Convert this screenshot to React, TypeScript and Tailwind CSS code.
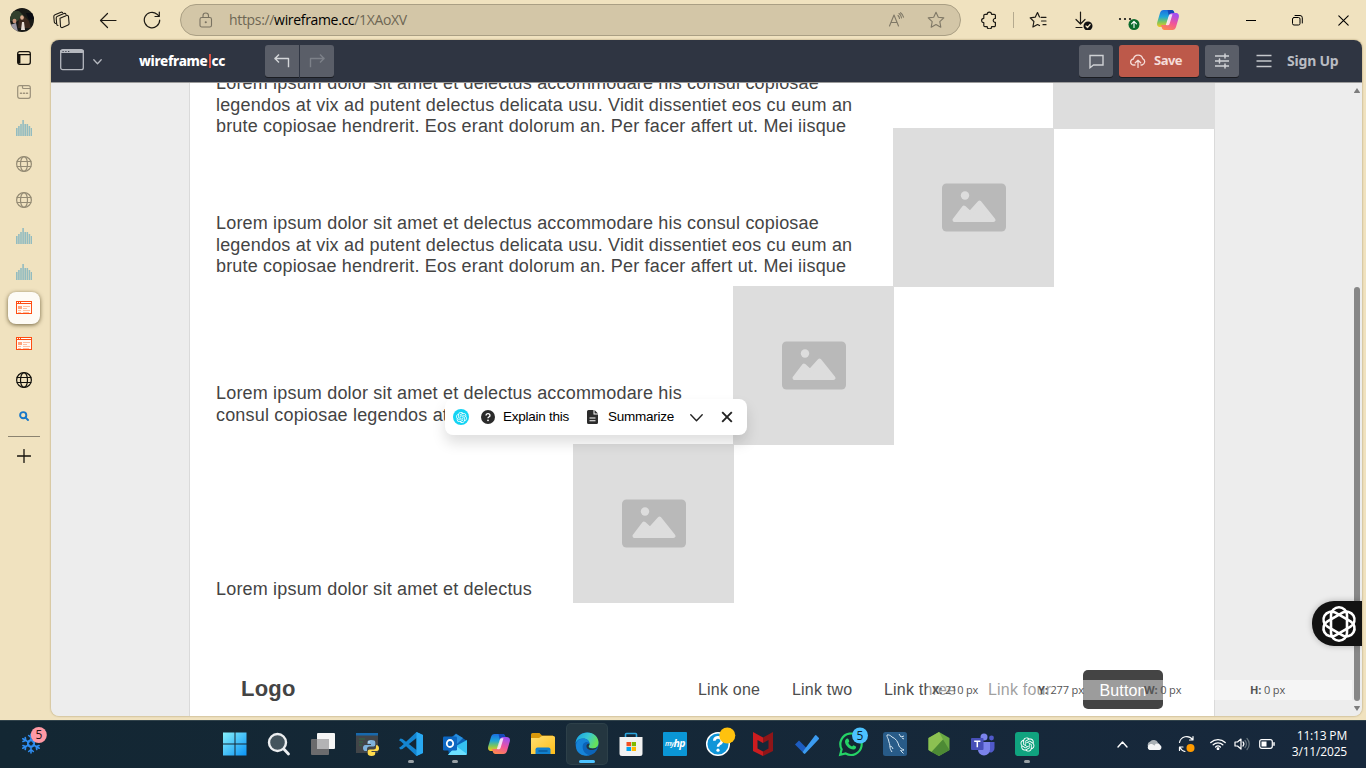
import React from "react";
import { RiOpenaiFill } from "react-icons/ri";

type SvgProps = { w: number; h?: number; vb?: string; className?: string; sw?: number; children: React.ReactNode };

function Line({ w, h, vb, className = "", sw = 1, children }: SvgProps) {
  const hh = h ?? w;
  return (
    <svg width={w} height={hh} viewBox={vb ?? `0 0 ${w} ${hh}`} className={`shrink-0 ${className}`} fill="none" stroke="currentColor" strokeWidth={sw} strokeLinecap="round" strokeLinejoin="round">
      {children}
    </svg>
  );
}

function Art({ w, h, vb, className = "", children }: SvgProps) {
  const hh = h ?? w;
  return (
    <svg width={w} height={hh} viewBox={vb ?? `0 0 ${w} ${hh}`} className={`shrink-0 ${className}`} fill="none">
      {children}
    </svg>
  );
}

function Cell({ className, children }: { className: string; children: React.ReactNode }) {
  return <div className={`flex shrink-0 items-center justify-center ${className}`}>{children}</div>;
}

function Copilot({ id, size }: { id: string; size: number }) {
  return (
    <Art w={size} vb="0 0 24 24">
      <defs>
        <linearGradient id={`${id}a`} x1="0" y1="0" x2="0" y2="1">
          <stop offset="0" stopColor="#1b6fe0" />
          <stop offset=".4" stopColor="#1fa6d8" />
          <stop offset=".7" stopColor="#7cc65c" />
          <stop offset="1" stopColor="#f7c51e" />
        </linearGradient>
        <linearGradient id={`${id}b`} x1="0.6" y1="0" x2="0.2" y2="1">
          <stop offset="0" stopColor="#a34ff0" />
          <stop offset=".5" stopColor="#f0559a" />
          <stop offset="1" stopColor="#ff8a4a" />
        </linearGradient>
      </defs>
      <path d="M7.500 2h8c1.700 0 2.300 1 2.800 2.700L19 7h-3.500c-1.500 0-2.300.8-2.800 2.300L10.500 17c-.5 1.600-1.300 2-3 2H4.500C1.500 19 .6 17 1.200 14.500L4 5c.6-2 1.700-3 3.500-3z" fill={`url(#${id}a)`} />
      <path d="M11.500 2h4c1.700 0 2.300 1 2.800 2.700L19 7h-3.500c-1.200 0-2 .5-2.500 1.500z" fill="#1648b8" />
      <path d="M16.500 22h-8c-1.700 0-2.300-1-2.800-2.700L5 17h3.500c1.500 0 2.300-.8 2.800-2.300L13.500 7c.5-1.600 1.300-2 3-2h3c3 0 3.900 2 3.300 4.500L20 19c-.6 2-1.700 3-3.500 3z" fill={`url(#${id}b)`} />
      <path d="M9.800 17l3-9.500c.4-1.200 1-1.500 2.200-1.300h1.500L13.700 15.500c-.5 1.500-1.300 1.700-2.500 1.700z" fill="#fff" fillOpacity=".8" />
    </Art>
  );
}

function TopBar() {
  return (
    <div className="flex h-10 shrink-0 items-center text-[#1d1a14]">
      <Cell className="w-11">
        <Art w={24}>
          <clipPath id="av"><circle cx="12" cy="12" r="12" /></clipPath>
          <g clipPath="url(#av)">
            <rect width="24" height="24" fill="#191a17" />
            <path d="M0 3h9l4 4-5 6H0z" fill="#33412d" />
            <path d="M9 11l5-3 5 5 2 7H8z" fill="#3d2a20" />
            <ellipse cx="12" cy="9.500" rx="1.800" ry="2.300" fill="#d9ac90" />
            <ellipse cx="4.500" cy="13" rx="2" ry="2.300" fill="#c79379" />
            <path d="M0 17l6-2 2 9H0z" fill="#9c97a2" />
            <path d="M12 14l2 0 1 8h-4z" fill="#e9ded6" />
            <path d="M16 5h8v6l-5 1z" fill="#0a0b12" />
          </g>
        </Art>
      </Cell>
      <Cell className="w-9">
        <Line w={18} sw={1.1}>
          <path d="M7 7.200l6-2.500a1.500 1.500 0 0 1 2.500 1.200l.6 6.600a1.500 1.500 0 0 1-1 1.500l-5.600 2.500a1.500 1.500 0 0 1-2-1.200z" />
          <path d="M5 14.500a1.800 1.800 0 0 1-1.300-1.400L3.200 7.200a2 2 0 0 1 1.300-2L11 2.500a1.600 1.600 0 0 1 2 .9" />
          <path d="M2.500 12.500a1.700 1.700 0 0 1-1.200-1.300L.8 5.800a2 2 0 0 1 1.200-2L8 1.200a1.500 1.500 0 0 1 1.600.5" />
        </Line>
      </Cell>
      <Cell className="w-14"><Line w={18} sw={1.200}><path d="M17 9.500H1.500M8.500 2.500l-7 7 7 7" /></Line></Cell>
      <Cell className="w-8"><Line w={18} sw={1.200}><path d="M16.700 9A7.700 7.700 0 1 1 14 3.200l2 2M16.300 1v4.500H12" /></Line></Cell>
      <div className="ml-3 flex h-8 w-[781px] shrink-0 items-center rounded-full border border-[#aa9f84] bg-[#d3c6a7]">
        <Cell className="w-[50px]">
          <Line w={14} h={16} className="text-[#7a7362]" sw={1.100}>
            <rect x="1" y="5.500" width="11.500" height="9.500" rx="1.800" />
            <path d="M4 5.500V3.700a2.700 2.700 0 0 1 5.500 0v1.800" />
            <circle cx="6.750" cy="10.300" r=".5" fill="currentColor" />
          </Line>
        </Cell>
        <div className="ml-[-2px] flex-1 pb-px font-['Open_Sans',sans-serif] text-[14px] tracking-[-0.33px] text-[#6e6754]">
          https://<span className="text-black">wireframe.cc</span>/1XAoXV
        </div>
        <Cell className="w-10">
          <Line w={17} h={16} className="text-[#7f7866]" sw={1.100}>
            <path d="M1.500 14L6 3l4.500 11M3 10.500h6M10 3.500a4 4 0 0 1 1.500 3M11 1.500A6 6 0 0 1 13.500 6M12.500 .7a7 7 0 0 1 3 4.500" />
          </Line>
        </Cell>
        <Cell className="mr-1 w-10">
          <Line w={18} className="text-[#7f7866]" sw={1.100}>
            <path d="M9 1.200l2.300 5 5.500.7-4 3.800 1 5.500L9 13.500l-4.800 2.700 1-5.500-4-3.800 5.500-.7z" />
          </Line>
        </Cell>
      </div>
      <Cell className="ml-[6px] w-11">
        <Line w={18} sw={1.200}>
          <path d="M5 3.300h2.200a2.200 2.200 0 0 1 4.400 0h2.600a1.200 1.200 0 0 1 1.200 1.200v3h-.8a2 2 0 0 0 0 3.800h.8v3.200a1.200 1.200 0 0 1-1.200 1.200h-2.600a2.200 2.200 0 0 1-4.400 0H5a1.200 1.200 0 0 1-1.200-1.200v-2.800a2.200 2.200 0 0 1 0-4.400V4.500A1.200 1.200 0 0 1 5 3.300z" />
        </Line>
      </Cell>
      <div className="ml-0.5 h-4 w-px bg-[#b5aa8f]" />
      <Cell className="w-12">
        <Line w={18} sw={1.200}>
          <path d="M12 6.300h5M12.500 10h4.500M14 13.700h3M10.500 6l-2-4.500-2.300 4.700-5 .7 3.700 3.600-1 5.500 4.600-2.500 2 1" />
        </Line>
      </Cell>
      <Cell className="w-[42px]">
        <Line w={20} className="ml-0.5" sw={1.200}>
          <path d="M6.500 2v12M2 9.500l4.500 4.500L11 9.500M2 17.500h6" />
          <circle cx="14" cy="16" r="4.500" fill="#111" stroke="none" />
          <path d="M12 16l1.500 1.500 2.600-3" stroke="#f0e2bf" />
        </Line>
      </Cell>
      <Cell className="w-12">
        <Line w={22} className="ml-0.5">
          <g fill="#111" stroke="none"><circle cx="2" cy="10" r="1.100" /><circle cx="7" cy="10" r="1.100" /><circle cx="12" cy="10" r="1.100" /></g>
          <circle cx="16" cy="15.500" r="5.500" fill="#0b6b2d" stroke="none" />
          <path d="M16 18.500v-6M13.500 14.800l2.500-2.500 2.500 2.500" stroke="#fff" strokeWidth="1.100" />
        </Line>
      </Cell>
      <Cell className="w-8"><Copilot id="ct" size={24} /></Cell>
      <Cell className="ml-11 w-[46px]"><Line w={10} className="text-black"><path d="M0 5.500h10" /></Line></Cell>
      <Cell className="w-[46px]"><Line w={11} className="text-black"><rect x=".5" y="2.500" width="7.500" height="7.500" rx="1.500" /><path d="M3 .5h5a2.300 2.300 0 0 1 2.300 2.300V8" /></Line></Cell>
      <Cell className="w-[46px]"><Line w={11} className="text-black" sw={1.100}><path d="M.8 .8l9.400 9.400M10.200 .8L.8 10.200" /></Line></Cell>
    </div>
  );
}

const Bars = () => (
  <Art w={16}>
    <g fill="#93bcc0">
      {[8, 6, 4, 0, 4, 4, 6, 8].map((t, i) => <rect key={i} x={i * 2.1} y={t} width={1.6} height={16 - t} />)}
    </g>
  </Art>
);
const Globe = ({ className }: { className: string }) => (
  <Line w={16} className={className} sw={1.200}>
    <circle cx="8" cy="8" r="7.400" /><ellipse cx="8" cy="8" rx="3.500" ry="7.400" /><path d="M1.200 5.500h13.600M1.200 10.500h13.600" />
  </Line>
);
const WireTab = () => (
  <Art w={16} h={14}>
    <rect x=".5" y=".5" width="15" height="12" stroke="#ff4d12" fill="#fffaf5" />
    <rect width="16" height="3" fill="#ff4d12" />
    <path d="M1 1.500h1M3 1.500h1M5 1.500h10" stroke="#fff" />
    <rect x="2" y="5" width="4" height="3" fill="#ffa37c" />
    <path d="M7 5.500h7M7 7.500h4M2 9.500h3M7 9.500h7M2 11.500h3M7 11.500h6" stroke="#ffb895" strokeWidth=".9" />
  </Art>
);

function Sidebar() {
  return (
    <div className="flex w-12 shrink-0 flex-col items-center">
      <Cell className="h-[34px] pt-[2px]">
        <Line w={14} className="text-[#15120c]" sw={1.300}><rect x=".7" y=".7" width="12.600" height="12.600" rx="2" /><path d="M1 3.700h12" /><path d="M2.200 4v8.500" strokeWidth="2.500" strokeLinecap="butt" /></Line>
      </Cell>
      <Cell className="h-9">
        <Line w={14} className="text-[#9a907a]" sw={1.200}><rect x=".7" y=".7" width="12.600" height="12.600" rx="2" /><path d="M5.500 1v1.500a1 1 0 0 0 1 1H13" /><path d="M3.500 8.300h1M6.500 8.300h1M9.500 8.300h1" strokeWidth="1.500" /></Line>
      </Cell>
      <Cell className="h-9"><Bars /></Cell>
      <Cell className="h-9"><Globe className="text-[#948b74]" /></Cell>
      <Cell className="h-9"><Globe className="text-[#948b74]" /></Cell>
      <Cell className="h-9"><Bars /></Cell>
      <Cell className="h-9"><Bars /></Cell>
      <Cell className="h-9"><Cell className="size-8 rounded-lg bg-[#fdfbf6] shadow-[0_1px_4px_rgba(60,45,10,0.7)]"><WireTab /></Cell></Cell>
      <Cell className="h-9"><WireTab /></Cell>
      <Cell className="h-9"><Globe className="text-[#12110c]" /></Cell>
      <Cell className="h-9"><Line w={10} className="text-[#1878c8]" sw={1.900}><circle cx="4.200" cy="4.200" r="3.100" /><path d="M6.600 6.600l2.400 2.400" /></Line></Cell>
      <div className="mt-0.5 h-px w-8 bg-[#8b8370]" />
      <Cell className="h-[38px]"><Line w={14} className="text-[#15120c]" sw={1.300}><path d="M7 .5v13M.5 7h13" /></Line></Cell>
    </div>
  );
}

const btn = "flex h-8 items-center justify-center bg-[#5a5e68] shadow-[0_1px_0_#1b1d22]";

function AppHeader() {
  return (
    <div className="flex h-[42px] shrink-0 items-center bg-[#2f3542] font-['Noto_Sans',sans-serif] text-[13px] font-bold">
      <Line w={24} h={22} className="-mt-0.5 ml-[9px] text-[#b5b8bf]" sw={1.300}>
        <rect x=".7" y=".7" width="22.600" height="20" rx="2" /><path d="M1.500 2.500h21" strokeWidth="2.800" /><path d="M3 2.500h.2M5.800 2.500h.2M8.600 2.500h.2" stroke="#2f3542" strokeWidth="1.200" />
      </Line>
      <Line w={9} h={6} className="ml-[9px] mt-px text-[#b5b8bf]" sw={1.300}><path d="M.8 .8l3.700 3.900L8.200 .8" /></Line>
      <div className="ml-[37px] flex w-[126px] items-center text-[13.500px] font-extrabold tracking-[-0.30px] text-white">
        wireframe<span className="mx-px h-[14px] w-0.5 bg-[#e2503f]" />cc
      </div>
      <div className={`${btn} w-[34px] rounded-l-[3px]`}><Line w={16} h={14} className="text-[#d4d6d9]" sw={1.400}><path d="M4.500 1L1 4.500 4.500 8M1 4.500h13.500V12.500" strokeLinecap="square" /></Line></div>
      <div className={`${btn} ml-px w-[34px] rounded-r-[3px]`}><Line w={16} h={14} className="text-[#7d8189]" sw={1.400}><path d="M11.500 1L15 4.500 11.500 8M15 4.500H1.500V12.500" strokeLinecap="square" /></Line></div>
      <div className="flex-1" />
      <div className={`${btn} w-[34px] rounded-[3px]`}><Line w={15} h={15} className="text-[#cfd1d4]" sw={1.400}><path d="M1 1.500h13v9.500H4.500L1 13.700z" strokeLinejoin="miter" /></Line></div>
      <div className="ml-1.5 flex h-8 w-20 items-center rounded-[3px] bg-[#bd594a] text-[#f5dcd8] shadow-[0_1px_0_#1b1d22]">
        <Line w={16} h={14} className="ml-[11px]" sw={1.300}><path d="M5 11H3.800A3 3 0 0 1 3.500 5 4.700 4.700 0 0 1 12.700 4.600 3.400 3.400 0 0 1 12 11h-1M8 13.500V6.500M5.300 8.800L8 6.200l2.700 2.600" /></Line>
        <span className="ml-[8px] tracking-[-0.5px]">Save</span>
      </div>
      <div className={`${btn} ml-1.5 w-[34px] rounded-[3px]`}><Line w={14} h={16} className="text-[#d0d2d5]" sw={1.500}><path d="M0 3h14M0 8h14M0 13h14" strokeLinecap="butt" /><path d="M10 1v4M4.500 6v4M10 11v4" /></Line></div>
      <Line w={16} h={14} className="ml-[17px] text-[#c5c8cc]" sw={1.500}><path d="M.5 1.500h15M.5 7h15M.5 12.500h15" strokeLinecap="butt" /></Line>
      <div className="ml-[15px] w-[75px] text-[14px] leading-5 tracking-[-0.20px] text-[#b9bcc2]">Sign Up</div>
    </div>
  );
}

function Placeholder({ className }: { className: string }) {
  return (
    <div className={`absolute flex h-[159px] w-[161px] items-center justify-center bg-[#ddd] ${className}`}>
      <Art w={64} h={49}>
        <rect y=".5" width="64" height="48" rx="4.500" fill="#b9b9b9" />
        <circle cx="23" cy="12.500" r="4.200" fill="#ddd" />
        <path d="M12.500 37L22 24.500L28 30L37.500 19.500L51.500 37z" fill="#ddd" stroke="#ddd" strokeWidth="4" strokeLinejoin="round" />
      </Art>
    </div>
  );
}

const para = "absolute left-[26px] whitespace-nowrap text-[18px] leading-[21.500px] tracking-[0.180px] text-[#444]";

function Canvas() {
  return (
    <div className="relative flex flex-1 overflow-hidden border-t border-[#9b9b9b] bg-[#ededed]">
      <div className="relative ml-[138px] w-[1026px] border-x border-[#dadada] bg-white font-['Liberation_Sans',sans-serif]">
        <div className={`${para} top-[-10px]`}>
          Lorem ipsum dolor sit amet et delectus accommodare his consul copiosae<br />legendos at vix ad putent delectus delicata usu. Vidit dissentiet eos cu eum an<br />brute copiosae hendrerit. Eos erant dolorum an. Per facer affert ut. Mei iisque
        </div>
        <div className={`${para} top-[130px]`}>
          Lorem ipsum dolor sit amet et delectus accommodare his consul copiosae<br />legendos at vix ad putent delectus delicata usu. Vidit dissentiet eos cu eum an<br />brute copiosae hendrerit. Eos erant dolorum an. Per facer affert ut. Mei iisque
        </div>
        <div className={`${para} top-[300px]`}>
          Lorem ipsum dolor sit amet et delectus accommodare his<br />consul copiosae legendos at
        </div>
        <div className={`${para} top-[496px]`}>Lorem ipsum dolor sit amet et delectus</div>
        <div className="absolute left-[863px] top-0 h-[46px] w-[162px] bg-[#ddd]" />
        <Placeholder className="left-[703px] top-[45px]" />
        <Placeholder className="left-[543px] top-[203px]" />
        <Placeholder className="left-[383px] top-[361px]" />
        <div className="absolute left-[51px] top-[593px] text-[22px] font-bold leading-[26px] tracking-[0.200px] text-[#444]">Logo</div>
        <div className="absolute left-[508px] top-[597px] flex text-[16px] leading-5 tracking-[0.200px] text-[#4d4d4d]">
          <span className="w-[94px]">Link one</span><span className="w-[92px]">Link two</span><span className="w-[104px]">Link three</span><span>Link four</span>
        </div>
        <div className="absolute left-[893px] top-[587px] flex h-[39px] w-20 items-center justify-center rounded-[5px] bg-[#444] pt-0.5 text-[16px] tracking-[0.100px] text-white">Button</div>
      </div>

      <div className="absolute left-[877px] top-[597px] flex h-5 w-[424px] items-center bg-white/47 pl-1 font-['Open_Sans',sans-serif] text-[11px] tracking-[-0.150px] text-[#555]">
        {[["X:", "210 px"], ["Y:", "277 px"], ["W:", "0 px"], ["H:", "0 px"]].map(([k, v]) => (
          <span key={k} className="w-[106px] shrink-0 whitespace-nowrap"><b className="text-[#555]">{k}</b> {v}</span>
        ))}
      </div>

      <div className="absolute left-[394px] top-[316px] flex h-9 w-[302px] items-center rounded-lg bg-white font-['Liberation_Sans',sans-serif] text-[13.500px] tracking-[-0.250px] text-black shadow-[0_8px_14px_rgba(0,0,0,0.13)]">
        <Cell className="ml-2 size-4 rounded-full bg-[#14d4f4]"><RiOpenaiFill size={13} className="text-white" /></Cell>
        <Art w={14} className="ml-3"><circle cx="7" cy="7" r="7" fill="#2b2b2b" /><path d="M5 5.400a2 1.800 0 1 1 2.700 1.700Q7 7.400 7 8.300" stroke="#fff" strokeWidth="1.400" /><circle cx="7" cy="10.300" r=".9" fill="#fff" /></Art>
        <span className="ml-2 w-[67px] whitespace-nowrap">Explain this</span>
        <Art w={12} h={14} className="ml-[17px]"><path d="M1.500 0H6.500V4.500H11V12.500a1.500 1.500 0 0 1-1.500 1.500h-8A1.500 1.500 0 0 1 0 12.500V1.500A1.500 1.500 0 0 1 1.500 0z" fill="#2b2b2b" /><path d="M7.500 0L11 3.500H7.500z" fill="#2b2b2b" /><path d="M2.500 8h6M2.500 10.700h6" stroke="#fff" strokeWidth="1.100" /></Art>
        <span className="ml-[9px] w-[66px] whitespace-nowrap">Summarize</span>
        <Line w={13} h={8} className="ml-[16px] mt-0.5 text-[#222]" sw={1.400}><path d="M.8 .8l5.700 5.900L12.200 .8" /></Line>
        <Line w={12} className="ml-[18px] text-[#222]" sw={1.900}><path d="M1.200 1.200l9.600 9.600M10.800 1.200L1.200 10.800" strokeLinecap="butt" /></Line>
      </div>

      <div className="absolute right-0 top-0 flex h-full w-[10px] flex-col items-center">
        <Art w={6} h={5} className="mt-[5px]"><path d="M3 0L6 4.500Q6 5 5.500 5H.5Q0 5 0 4.500z" fill="#7d7d7d" /></Art>
        <div className="mt-[194px] h-[414px] w-1.5 rounded-full bg-[#878787]" />
        <Art w={6} h={5} className="mt-[5px]"><path d="M3 5L6 .5Q6 0 5.500 0H.5Q0 0 0 .5z" fill="#7d7d7d" /></Art>
      </div>

      <div className="absolute right-0 top-[518px] flex h-[45px] w-[50px] items-center rounded-l-[22px] bg-[#121212] pl-[9px] shadow-[0_0_6px_rgba(0,0,0,0.25)]">
        <Line w={36} sw={2.600} className="text-white">
          {[0, 60, 120].map((a) => <rect key={a} x="10" y="1.300" width="16" height="33.400" rx="8" transform={`rotate(${a} 18 18)`} />)}
        </Line>
      </div>
    </div>
  );
}

function TaskIcon({ children, dot = false }: { children: React.ReactNode; dot?: boolean }) {
  return (
    <div className="relative flex h-12 w-11 shrink-0 items-center justify-center">
      {children}
      {dot && <span className="absolute bottom-[5px] h-[3px] w-1.5 rounded-full bg-[#98a0a5]" />}
    </div>
  );
}

function Taskbar() {
  return (
    <div className="flex h-12 shrink-0 items-center border-t border-[#31434b] bg-linear-to-r from-[#132733] to-[#17283c] pb-px">
      <div className="w-[213px] pl-[20px]">
        <Art w={28} h={30} className="-mt-1.5">
          <g stroke="#2f8df0" strokeWidth="1.600" strokeLinecap="round">
            {[0, 60, 120, 180, 240, 300].map((a) => <path key={a} transform={`rotate(${a} 11 17.5)`} d="M11 15V8M8.700 9.500L11 11.500 13.300 9.500M9 15L11 13.800 13 15" />)}
          </g>
          <circle cx="18.800" cy="9" r="8" fill="#ff99a4" />
          <text x="19" y="13.200" textAnchor="middle" className="fill-[#2a1418] font-['Open_Sans',sans-serif] text-[12px]">5</text>
        </Art>
      </div>
      <TaskIcon>
        <Art w={24}><defs><linearGradient id="wn" x1="0" y1="0" x2="1" y2="1"><stop stopColor="#86f0fb" /><stop offset="1" stopColor="#0a93f5" /></linearGradient></defs><path d="M0 .5h11.500v11H0zM12.500 .5h11v11h-11zM0 12.500h11.500v11H0zM12.500 12.500h11v11h-11z" fill="url(#wn)" /></Art>
      </TaskIcon>
      <TaskIcon>
        <Art w={24}><circle cx="10.500" cy="10.500" r="8.500" fill="#44545d" stroke="#eceef0" strokeWidth="2.400" /><path d="M16.800 17l4.700 5" stroke="#eceef0" strokeWidth="2.800" strokeLinecap="round" /></Art>
      </TaskIcon>
      <TaskIcon>
        <Art w={24}><rect x="6" y="1" width="18" height="16" rx="1" fill="#f5f5f5" /><rect x="0" y="7" width="18" height="16" rx="1" fill="#6b6b6d" /><rect x="6" y="7" width="12" height="10" fill="#b3b3b5" /></Art>
      </TaskIcon>
      <TaskIcon>
        <Art w={24}>
          <rect x="1" y="1" width="22" height="20" fill="#424548" /><rect x="1" y="1" width="22" height="2.500" fill="#1769ad" /><path d="M4 7h6M4 10h4M4 13h3" stroke="#316b43" />
          <path d="M16 8c-3 0-3.500 1-3.500 2.500V12H16v1h-5.500C8.500 13 8 14.500 8 16s.7 3 2 3h2v-2c0-1.500 1-2.500 2.500-2.500h4c1 0 1.800-.8 1.800-2v-2C20.300 8.700 19 8 16 8z" fill="#7fb2dc" />
          <path d="M16.500 24c3 0 3.700-1 3.700-2.500V20h-3.700v-1h5.300c1.700 0 2.200-1.300 2.200-2.800s-.7-3-2-3h-1v2c0 1.300-1 2.300-2.300 2.300h-4c-1.200 0-2 .8-2 2v2c0 1.600 1.300 2.500 3.800 2.500z" fill="#ffdb4d" />
          <circle cx="14" cy="10" r=".7" fill="#fff" />
        </Art>
      </TaskIcon>
      <TaskIcon dot>
        <Art w={24}><path d="M17.500 0L24 3v18l-6.500 3L2 9.500 0 8.200l1.500-1.700L3.500 7 17.500 18V6L3.500 17l-2 .5L0 15.800 2 14.500z" fill="#1485d1" /><path d="M17.500 0L24 3v18l-6.500 3z" fill="#29a9f2" /></Art>
      </TaskIcon>
      <TaskIcon dot>
        <Art w={24}><path d="M4 9l9-7.500L24 9v12a2 2 0 0 1-2 2H6z" fill="#0a62b5" /><path d="M7 8l6-6 7 4-8 8z" fill="#2990df" /><path d="M13 14L24 8v13a2 2 0 0 1-2 2H5l8-9z" fill="#35c1f1" /><path d="M13 14l11 8a2 2 0 0 1-2 1H5z" fill="#6ce0ff" /><rect y="4.500" width="14" height="14" rx="1.300" fill="#0d67c2" /><ellipse cx="7" cy="11.500" rx="3.200" ry="3.500" stroke="#fff" strokeWidth="1.800" /></Art>
      </TaskIcon>
      <TaskIcon><Copilot id="cb" size={24} /></TaskIcon>
      <TaskIcon>
        <Art w={24}><defs><linearGradient id="fo" x1="0" y1="0" x2="1" y2="1"><stop stopColor="#ffdf72" /><stop offset="1" stopColor="#ffbd18" /></linearGradient></defs><path d="M0 2.500A1.500 1.500 0 0 1 1.500 1h7l2.500 2.500H22V10H0z" fill="#d9980a" /><path d="M0 6h8l3-2h11.500A1.500 1.500 0 0 1 24 5.500V22H0z" fill="url(#fo)" /><path d="M4.500 22v-4.500A2 2 0 0 1 6.500 15.500h11a2 2 0 0 1 2 2V22z" fill="#1180ce" /><path d="M8 19h8" stroke="#0b5a9c" strokeWidth="1.500" strokeLinecap="round" /></Art>
      </TaskIcon>
      <div className="relative flex h-12 w-11 shrink-0 items-center justify-center">
        <div className="flex h-10 w-10 items-center justify-center rounded bg-[#243640] ring-1 ring-[#2d4049]">
          <Art w={24}>
            <defs><linearGradient id="ed" x1="0" y1="0" x2="1" y2=".4"><stop stopColor="#159fe0" /><stop offset=".55" stopColor="#38c6d4" /><stop offset="1" stopColor="#66e05a" /></linearGradient></defs>
            <circle cx="12" cy="12" r="11.500" fill="#0c64b8" />
            <path d="M.6 11C1.500 4.500 6.500 .5 12.300 .5 19 .5 23.500 5.300 23.500 10.500c0 4-2.700 6-5.800 6-2.800 0-4.200-1-4.200-1.900 0-.7 1-1.200 1-3 0-2.800-2.800-5-6.300-5C4.800 6.600 2 8 .6 11z" fill="url(#ed)" />
            <path d="M8.500 11.500c-2.500 4 .5 11 6 11.700-5 1.500-10.500-.7-12.700-5C-.2 13.500 1.500 7 8 6.600c3.500 0 6 2 6.400 4.300-1.700-1.500-4.300-1.300-5.900.6z" fill="#1684d8" />
            <path d="M14.500 11.500c.3 1.500-.9 2.300-.9 3 0 1 1.500 2 4.100 2 1.800 0 3.300-.6 5.300-1.700-1.200 1.700-3 3-5 3.200-4.500.5-7-2-6.500-4.500.4-1.300 1.500-2 3-2z" fill="#243640" />
          </Art>
        </div>
        <span className="absolute bottom-[5px] h-[3px] w-4 rounded-full bg-[#4cc2ff]" />
      </div>
      <TaskIcon>
        <Art w={24}><path d="M6.500 6V2.500a1 1 0 0 1 1-1h9a1 1 0 0 1 1 1V6" stroke="#2ba5dd" strokeWidth="1.600" /><path d="M.5 5h23v16.500a2.500 2.500 0 0 1-2.500 2.500H3a2.500 2.500 0 0 1-2.500-2.500z" fill="#f2f2f2" /><path d="M7.500 10H12v4.200H7.500z" fill="#f25022" /><path d="M12.700 10H17v4.200h-4.300z" fill="#7fba00" /><path d="M7.500 15H12v4H7.500z" fill="#00a4ef" /><path d="M12.700 15H17v4h-4.300z" fill="#ffb900" /></Art>
      </TaskIcon>
      <TaskIcon>
        <div className="flex size-6 items-center justify-center rounded-[1px] bg-[#0a96d6] font-['Open_Sans',sans-serif] text-[7px] font-semibold italic tracking-[-0.6px] text-white">my<span className="text-[10.500px] font-bold">hp</span></div>
      </TaskIcon>
      <TaskIcon>
        <Art w={34} h={34}>
          <circle cx="16" cy="17" r="11.300" fill="#0f95d8" stroke="#fff" strokeWidth="1.500" /><path d="M12.300 13.800a3.700 3.500 0 1 1 5.300 3.200Q16 18 16 19.800" stroke="#fff" strokeWidth="2.600" /><circle cx="16" cy="23.200" r="1.600" fill="#fff" /><circle cx="25.300" cy="8.500" r="8" fill="#ffc20e" />
        </Art>
      </TaskIcon>
      <TaskIcon>
        <Art w={22} h={24}><path d="M1 0l10 5.500V11L5.500 8v8.500L11 19.500V24L1 19z" fill="#cc1c1f" /><path d="M21 0L11 5.500V11l5.500-3v8.500L11 19.500V24l10-5z" fill="#8f1518" /></Art>
      </TaskIcon>
      <TaskIcon>
        <Art w={24}><path d="M0 12.500l4-4 7.500 7.500-4 4z" fill="#1d5cc0" /><path d="M7.500 20L20 3.500a1 1 0 0 1 1.500 0l2.200 2.200a1 1 0 0 1 0 1.500L10.300 21.500a1 1 0 0 1-1.500 0L5.500 18z" fill="#3b9bf0" /></Art>
      </TaskIcon>
      <TaskIcon>
        <Art w={34} h={34}>
          <path d="M6.200 27.700l1.400-5.400A10.700 10.700 0 1 1 11.700 26.500z" fill="#132733" stroke="#25d366" strokeWidth="2.200" /><path d="M12.500 11.800c1-.8 1.700-.3 2 .5l.7 1.700c.3.8-.8 1.300-.9 1.800.7 1.700 2 2.900 3.700 3.600.6 0 1.200-1.400 2-1l1.900 1c.7.5-.1 2.600-1.900 3-4 .6-9.300-4.200-9-8 .1-1 .7-2 1.500-2.600z" fill="#25d366" />
          <circle cx="26" cy="8.500" r="8" fill="#4cc2ff" /><text x="26" y="12.700" textAnchor="middle" className="fill-[#0c2230] font-['Open_Sans',sans-serif] text-[12px]">5</text>
        </Art>
      </TaskIcon>
      <TaskIcon>
        <Art w={24}><rect width="24" height="24" rx="2.500" fill="#285b88" /><path d="M4 3c1.500-.5 3.500.3 5 2 4 1.500 6 5 7 9 1 2 3 3 5 4-2 .3-3 .3-3.500.5l3 3M4 3c-.3 2 1 3 1.500 5 .5 3 1.500 4 1.500 7 0 2 1 3.500 2 5M7 15c1-2 2 0 3 2M16 2l2 3 3-1M19 6l2 1" stroke="#d4e5f1" /></Art>
      </TaskIcon>
      <TaskIcon>
        <Art w={22} h={24}><path d="M11 0l10.500 6v12L11 24 .5 18V6z" fill="#6aa944" /><path d="M11 0l4 7.500L3.500 20 .5 18V6z" fill="#8cc152" /><path d="M15 7.500L21.500 18 11 24 3.500 20z" fill="#4d8a35" /></Art>
      </TaskIcon>
      <TaskIcon>
        <Art w={24}><circle cx="13" cy="5" r="3.500" fill="#7b83eb" /><circle cx="20.500" cy="6" r="2.400" fill="#5059c9" /><path d="M17 10h6.500v6a4 4 0 0 1-6.500 3.500z" fill="#5059c9" /><path d="M7 10h12v7.500a6 6 0 0 1-12 0z" fill="#7b83eb" /><rect x="0" y="6" width="12.500" height="12" rx="1" fill="#474fb8" /><path d="M3.200 9.300h6.200M6.300 9.300V15.300" stroke="#fff" strokeWidth="1.500" /></Art>
      </TaskIcon>
      <TaskIcon dot><Cell className="size-6 rounded-[3px] bg-[#10a37f]"><RiOpenaiFill size={17} className="text-white" /></Cell></TaskIcon>
      <div className="flex flex-1 items-center text-white">
        <Line w={11} h={7} className="ml-[68px]" sw={1.400}><path d="M1 6l4.500-5L10 6" /></Line>
        <Art w={16} h={11} className="ml-[18px]"><path d="M4 9.500a3.700 3.700 0 0 1 .2-7A5 5 0 0 1 12 3.500l-3 3z" fill="#a9b0b5" /><path d="M3.500 11a3 3 0 0 1 0-5.500c2-1 3.500 0 5 1 1-2.500 4.500-3 5.500-.5A2.700 2.700 0 0 1 13.500 11z" fill="#f4f5f6" /></Art>
        <Line w={18} h={18} className="ml-[16px]" sw={1.200}><path d="M1.500 7.500A7.300 7.300 0 0 1 14.500 4.500M15 1.500v3.500h-3.500M1.500 15.500V12H5M2 12.500a7 7 0 0 0 5 4" /><circle cx="12.500" cy="13" r="4" fill="#ff9b00" stroke="none" /></Line>
        <Line w={16} h={12} className="ml-[14px]" sw={1.300}><path d="M.8 4.500a10.500 10.500 0 0 1 14.400 0M3.200 6.800a7 7 0 0 1 9.600 0M5.600 9a3.600 3.600 0 0 1 4.800 0" /><circle cx="8" cy="10.700" r=".8" fill="currentColor" /></Line>
        <Line w={16} h={14} className="ml-[8px]" sw={1.200}><path d="M1 5v4h2.500L7 12V2L3.500 5zM9 5a3 3 0 0 1 0 4" /><path d="M11 3.500a5 5 0 0 1 0 7M13 1.500a8 8 0 0 1 0 11" stroke="#64737c" /></Line>
        <Line w={16} h={10} className="ml-[9px]" sw={1.200}><rect x=".7" y=".7" width="12.600" height="8.600" rx="2" /><rect x="2.500" y="2.500" width="5" height="5" fill="currentColor" stroke="none" /><path d="M15 3.700v2.600" strokeWidth="1.500" /></Line>
        <div className="flex-1 pr-[19px] text-right font-['Open_Sans',sans-serif] text-[12px] leading-4 tracking-[-0.180px]">11:13 PM<br />3/11/2025</div>
      </div>
    </div>
  );
}

export default function App() {
  return (
    <div className="flex h-[768px] w-[1366px] flex-col overflow-hidden bg-[#f0e2bf]">
      <TopBar />
      <div className="flex h-[680px] shrink-0">
        <Sidebar />
        <div className="ml-[3px] flex h-[676px] w-[1311px] shrink-0 flex-col overflow-hidden rounded-[8px] shadow-[0_0_2px_rgba(100,80,30,0.6)]">
          <AppHeader />
          <Canvas />
        </div>
      </div>
      <Taskbar />
    </div>
  );
}
